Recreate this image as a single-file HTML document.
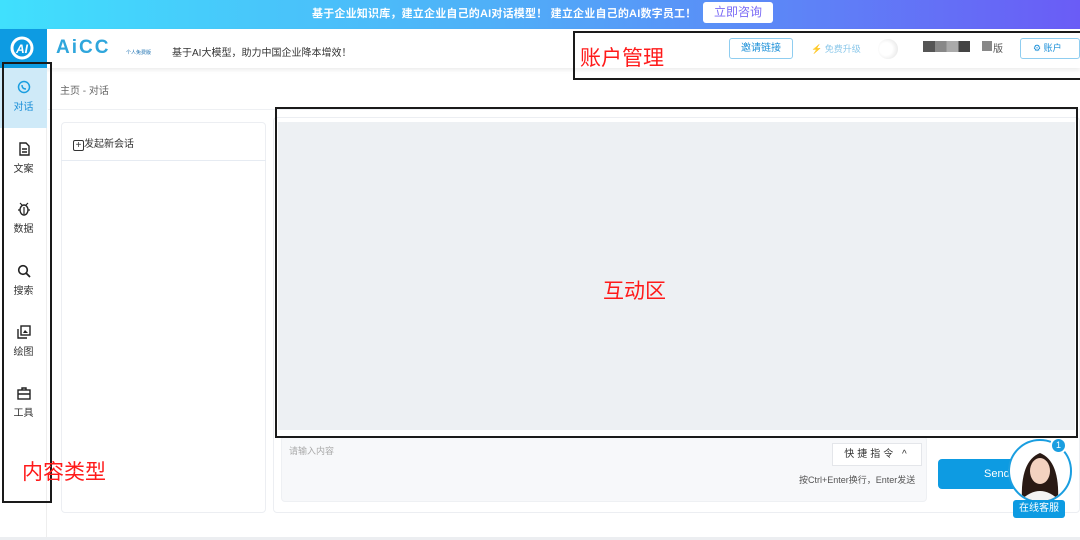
<!DOCTYPE html>
<html><head><meta charset="utf-8">
<style>
*{margin:0;padding:0;box-sizing:border-box}
body{width:1080px;height:540px;overflow:hidden;background:#fff;font-family:"Liberation Sans","Noto Sans CJK SC",sans-serif;position:relative;color:#333}
.abs{position:absolute}
.banner{left:0;top:0;width:1080px;height:29px;background:linear-gradient(90deg,#40e0fd 0%,#4fb0f8 45%,#6a5cf6 100%)}
.banner .t{left:312px;top:5px;color:#fff;font-weight:bold;font-size:11px;white-space:nowrap;letter-spacing:0.2px}
.banner .b{left:703px;top:2px;width:70px;height:21px;background:#fff;border-radius:3px;color:#7a6af5;font-size:12px;text-align:center;line-height:21px}
.header{left:0;top:29px;width:1080px;height:39px;background:#fff;box-shadow:0 2px 4px rgba(0,0,0,.08)}
.logo{left:0;top:29px;width:47px;height:39px;background:#0d9be2}
.side{left:0;top:68px;width:47px;height:472px;background:#fff;border-right:1px solid #eee}
.nav{position:absolute;left:0;width:47px;text-align:center;font-size:10px;color:#333}
.nav svg{display:block;margin:0 auto 4px}
.box{border:2px solid #1a1a1a}
.red{color:#ff1a1a;font-size:21px}
</style></head><body>
<div class="abs banner"><div class="abs t">基于企业知识库，建立企业自己的AI对话模型！ 建立企业自己的AI数字员工！</div><div class="abs b">立即咨询</div></div>
<div class="abs header"></div>
<div class="abs logo"><svg width="47" height="39"><circle cx="22" cy="19" r="10" fill="none" stroke="#fff" stroke-width="3"/><text x="16" y="24" fill="#fff" font-size="12" font-weight="bold" font-style="italic" font-family="Liberation Sans">AI</text></svg></div>
<div class="abs" style="left:56px;top:37px;font-size:19px;font-weight:bold;color:#2fa6dc;letter-spacing:2px;font-family:'Liberation Sans',sans-serif">AiCC</div>
<div class="abs" style="left:126px;top:49px;font-size:5px;color:#1a6fb0">个人免费版</div>
<div class="abs" style="left:172px;top:44px;font-size:10px;color:#333">基于AI大模型，助力中国企业降本增效！</div>
<div class="abs" style="left:729px;top:38px;width:64px;height:21px;border:1px solid #8fcdf0;border-radius:3px;font-size:10px;color:#1a8fd8;text-align:center;line-height:19px">邀请链接</div>
<div class="abs" style="left:811px;top:42px;font-size:9px;color:#8cc8ea"><span style="color:#1a8fd8">⚡</span> 免费升级</div>
<div class="abs" style="left:878px;top:39px;width:20px;height:20px;border-radius:50%;background:radial-gradient(circle at 40% 50%,#fff 40%,#ddd 100%)"></div>
<div class="abs" style="left:923px;top:41px;width:47px;height:11px;background:linear-gradient(90deg,#555 0 25%,#888 25% 50%,#aaa 50% 75%,#444 75%)"></div>
<div class="abs" style="left:982px;top:41px;width:10px;height:10px;background:#888"></div>
<div class="abs" style="left:993px;top:40px;font-size:10px;color:#555">版</div>
<div class="abs" style="left:1020px;top:38px;width:60px;height:21px;border:1px solid #8fcdf0;border-radius:3px;font-size:9px;color:#1a8fd8;line-height:19px;padding-left:12px">⚙ 账户</div>

<div class="abs side"></div>
<div class="abs" style="left:0;top:68px;width:47px;height:60px;background:#cfeaf8"></div>
<div class="nav" style="top:80px;color:#1a8fd8"><svg width="14" height="14" viewBox="0 0 14 14"><circle cx="7" cy="7" r="5.5" fill="none" stroke="#1a9ee0" stroke-width="1.5"/><path d="M5 5 Q5 9 9 9" stroke="#1a9ee0" stroke-width="1.5" fill="none"/></svg>对话</div>
<div class="nav" style="top:142px"><svg width="14" height="14" viewBox="0 0 14 14"><path d="M3 1h6l3 3v9H3z M5 7h5 M5 10h5" fill="none" stroke="#222" stroke-width="1.4"/></svg>文案</div>
<div class="nav" style="top:202px"><svg width="14" height="14" viewBox="0 0 14 14"><ellipse cx="7" cy="8" rx="4" ry="5" fill="none" stroke="#222" stroke-width="1.4"/><path d="M1 8h2M11 8h2M5 3L3 1M9 3l2-2M7 5v7" stroke="#222" stroke-width="1.2"/></svg>数据</div>
<div class="nav" style="top:264px"><svg width="14" height="14" viewBox="0 0 14 14"><circle cx="6" cy="6" r="4.3" fill="none" stroke="#222" stroke-width="1.6"/><path d="M9 9l4 4" stroke="#222" stroke-width="1.8"/></svg>搜索</div>
<div class="nav" style="top:325px"><svg width="14" height="14" viewBox="0 0 14 14"><rect x="4" y="1" width="9" height="9" fill="none" stroke="#222" stroke-width="1.4"/><path d="M1 4v9h9" fill="none" stroke="#222" stroke-width="1.4"/><path d="M6 8l2-3 3 3z" fill="#222"/></svg>绘图</div>
<div class="nav" style="top:386px"><svg width="14" height="14" viewBox="0 0 14 14"><rect x="1" y="4" width="12" height="9" fill="none" stroke="#222" stroke-width="1.4"/><path d="M5 4V2h4v2M1 8h12" fill="none" stroke="#222" stroke-width="1.4"/></svg>工具</div>

<div class="abs" style="left:60px;top:82px;font-size:10px;color:#666">主页 - 对话</div>
<div class="abs" style="left:48px;top:109px;width:1032px;height:1px;background:#eef0f3"></div>
<div class="abs" style="left:61px;top:122px;width:205px;height:391px;border:1px solid #eceef2;border-radius:4px"></div>
<div class="abs" style="left:61px;top:160px;width:205px;height:1px;background:#e6ebf2"></div>
<div class="abs" style="left:73px;top:135px;font-size:10px;color:#333"><span style="display:inline-block;width:11px;height:11px;border:1px solid #333;border-radius:2px;font-size:10px;line-height:9px;text-align:center;vertical-align:-1px">+</span>发起新会话</div>

<div class="abs" style="left:273px;top:117px;width:807px;height:396px;border:1px solid #eceef2;border-radius:4px"></div>
<div class="abs" style="left:278px;top:122px;width:797px;height:308px;background:#edf0f3"></div>
<div class="abs" style="left:281px;top:436px;width:646px;height:66px;background:#f7f8fa;border-radius:4px;border:1px solid #eef0f3"></div>
<div class="abs" style="left:289px;top:444px;font-size:9px;color:#aaa">请输入内容</div>
<div class="abs" style="left:832px;top:443px;width:90px;height:23px;background:#fff;border:1px solid #e4e6ea;font-size:10px;color:#333;text-align:center;line-height:21px;letter-spacing:3px">快捷指令 ^</div>
<div class="abs" style="left:799px;top:473px;font-size:9px;color:#555">按Ctrl+Enter换行，Enter发送</div>
<div class="abs" style="left:938px;top:459px;width:122px;height:30px;background:#0d9be2;border-radius:4px;color:#fff;font-size:11px;line-height:30px;padding-left:46px">Send</div>
<div class="abs" style="left:0;top:537px;width:1080px;height:3px;background:#eceef1"></div>

<div class="abs" style="left:1008px;top:439px;width:64px;height:64px;border-radius:50%;border:2px solid #1a9ee0;background:#fff;overflow:hidden"><svg width="60" height="60"><path d="M12 60 Q10 20 30 12 Q50 20 48 60z" fill="#2a1a14"/><ellipse cx="30" cy="30" rx="10" ry="13" fill="#f3d2c0"/><path d="M10 60 Q30 40 50 60z" fill="#f4f4f4"/></svg></div>
<div class="abs" style="left:1050px;top:437px;width:17px;height:17px;border-radius:50%;background:#1a9ee0;border:2px solid #fff;color:#fff;font-size:9px;text-align:center;line-height:13px">1</div>
<div class="abs" style="left:1013px;top:500px;width:52px;height:18px;background:#0d9be2;border-radius:3px;color:#fff;font-size:10px;text-align:center;line-height:18px">在线客服</div>

<div class="abs box" style="left:2px;top:62px;width:50px;height:441px"></div>
<div class="abs red" style="left:22px;top:456px">内容类型</div>
<div class="abs box" style="left:573px;top:31px;width:510px;height:49px"></div>
<div class="abs red" style="left:580px;top:42px">账户管理</div>
<div class="abs box" style="left:275px;top:107px;width:803px;height:331px"></div>
<div class="abs red" style="left:603px;top:275px">互动区</div>
</body></html>
